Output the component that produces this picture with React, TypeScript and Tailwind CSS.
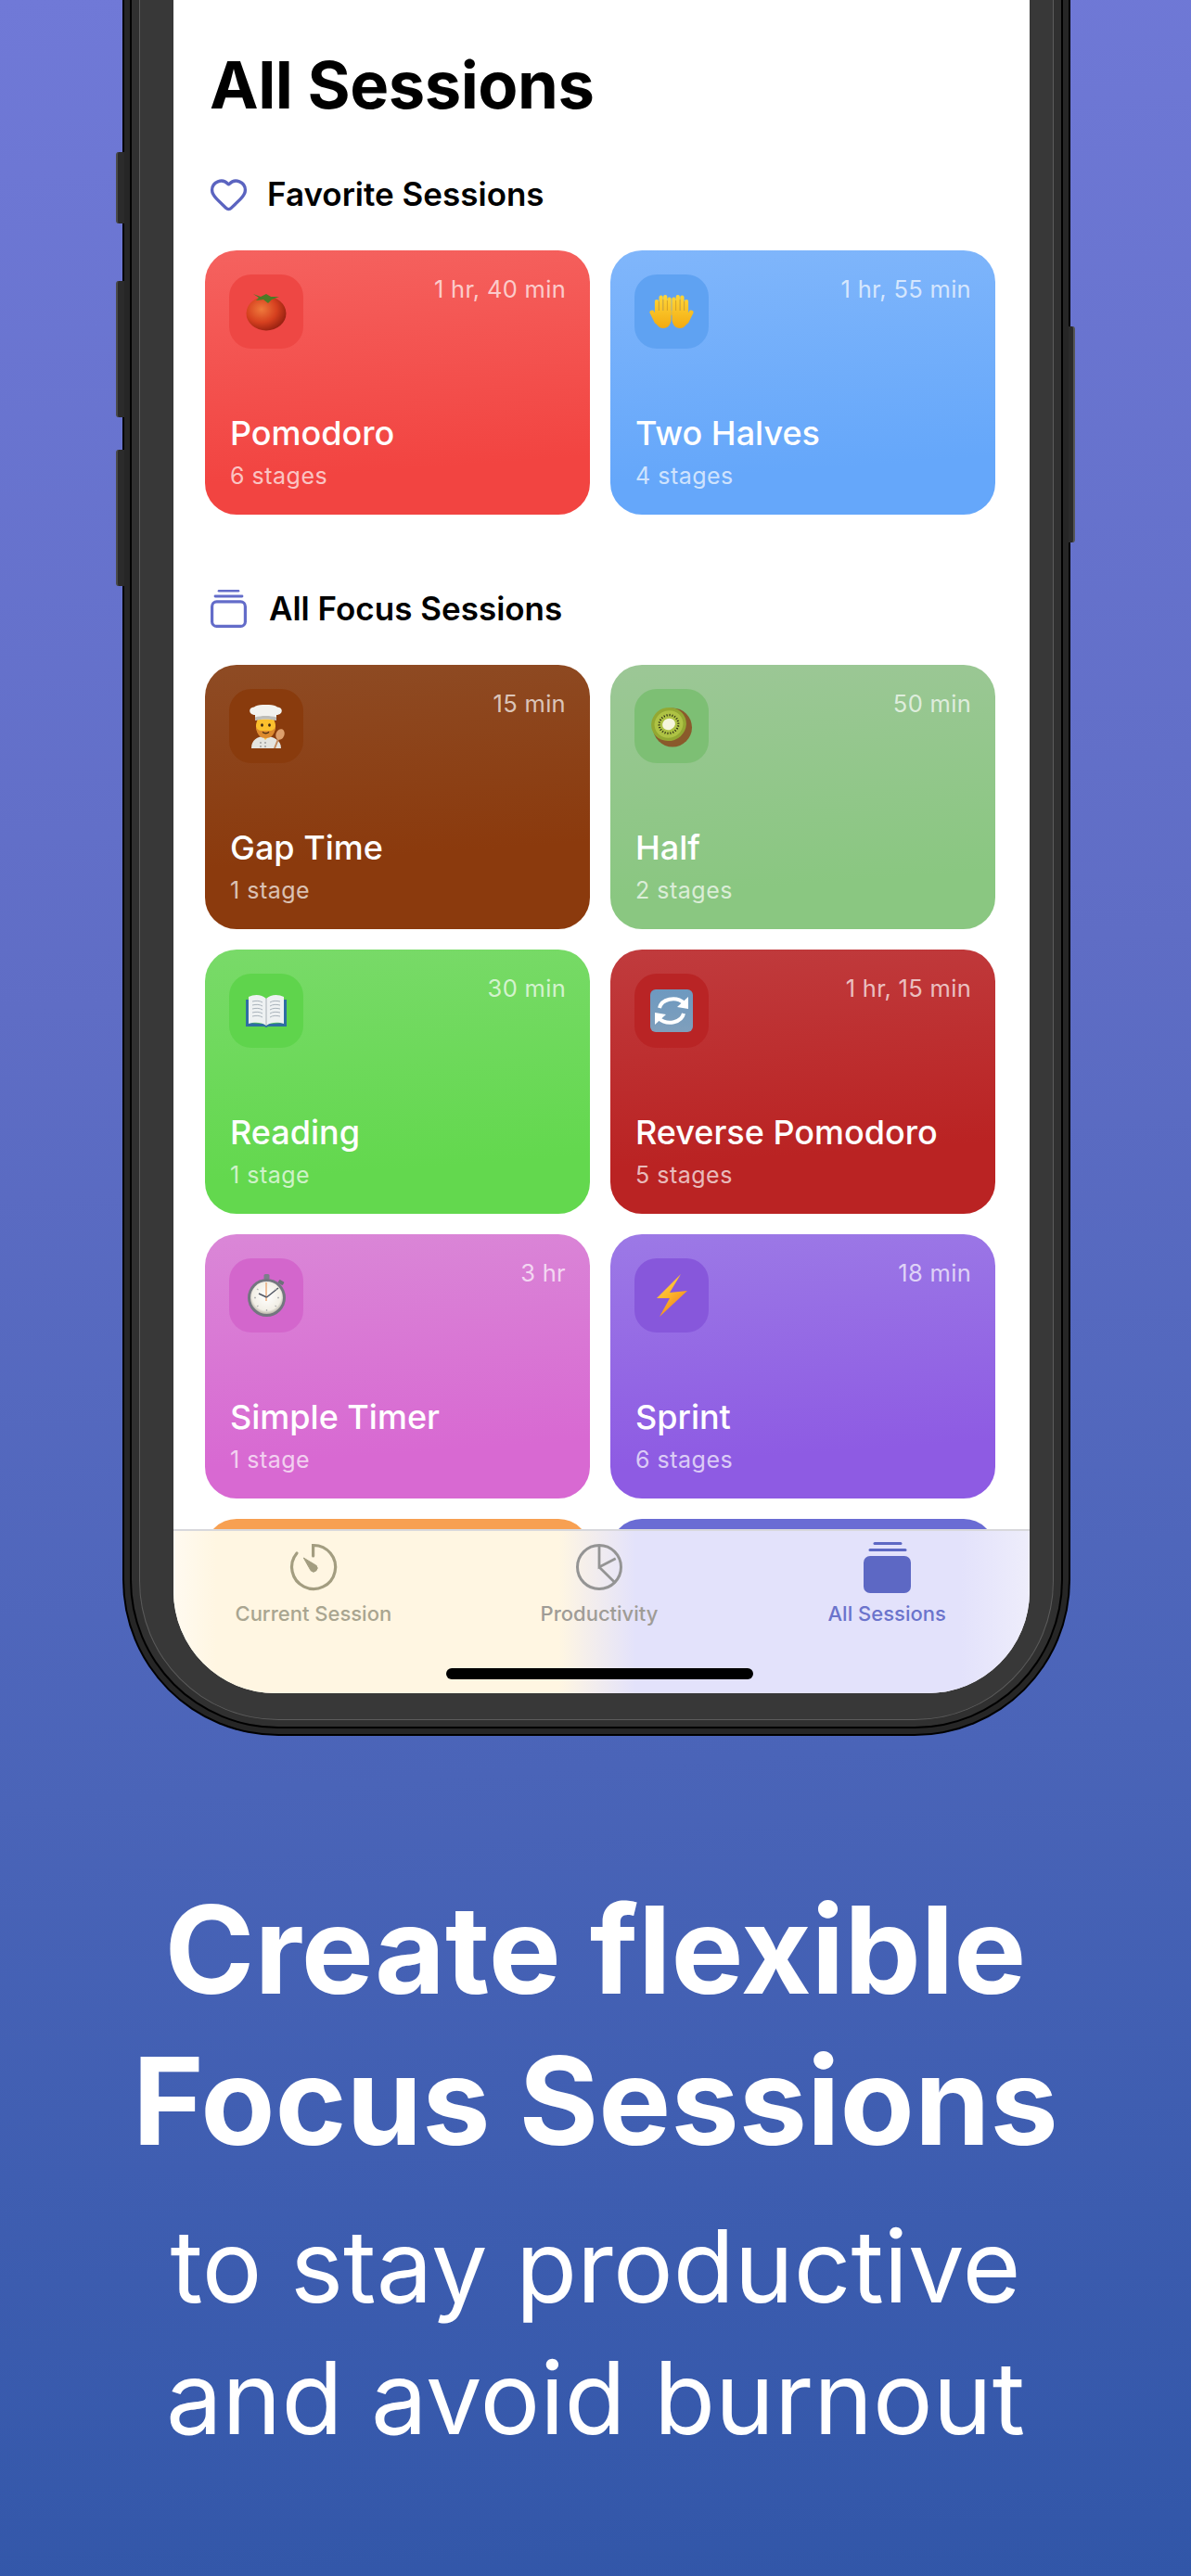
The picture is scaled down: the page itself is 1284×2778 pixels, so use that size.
import { Heart } from 'lucide-react'
import type { ReactNode } from 'react'

function Tomato() {
  return (
    <svg viewBox="0 0 44 42" className="h-[42px] w-[44px]">
      <defs>
        <radialGradient id="tomato" cx="0.38" cy="0.38" r="0.7">
          <stop offset="0" stopColor="#ef7a3c" />
          <stop offset="0.55" stopColor="#d6401f" />
          <stop offset="1" stopColor="#8e1c0e" />
        </radialGradient>
      </defs>
      <ellipse cx="22" cy="23" rx="21.5" ry="18.5" fill="url(#tomato)" />
      <path d="M8 2 L16 5 L22 2 L27 5 L36 5 L28 8 L24 12 L19 8 L11 9 L14 6 Z" fill="#4c7a26" />
    </svg>
  )
}

function Hand({ flip }: { flip?: boolean }) {
  return (
    <g transform={flip ? 'translate(48 0) scale(-1 1)' : undefined}>
      <path d="M3 20 L8 30" stroke="url(#palm)" strokeWidth="5" strokeLinecap="round" />
      <path d="M6 18 H23.5 V27 C23.5 33 20 37 15 37 C10 37 6 32 6 26 Z" fill="url(#palm)" />
      <path d="M8 8 V20 M12.6 3.5 V20 M17.2 3 V20 M21.6 5.5 V22" stroke="url(#palm)" strokeWidth="4.2" strokeLinecap="round" />
      <path d="M10.3 8 V18 M14.9 6 V18 M19.4 7 V18" stroke="#d9960f" strokeWidth="0.7" />
    </g>
  )
}

function Hands() {
  return (
    <svg viewBox="0 0 48 38" className="h-[38px] w-[48px]">
      <defs>
        <linearGradient id="palm" x1="0" y1="0" x2="0" y2="38" gradientUnits="userSpaceOnUse">
          <stop offset="0" stopColor="#ffd83b" />
          <stop offset="1" stopColor="#f3a90f" />
        </linearGradient>
      </defs>
      <Hand />
      <Hand flip />
    </svg>
  )
}

function Chef() {
  return (
    <svg viewBox="0 0 42 47" className="h-[47px] w-[42px]">
      <path d="M5 47 C5 38 11 34 20 34 C29 34 37 38 37 47 Z" fill="#e4e4e0" />
      <path d="M17 34 L20 38 L24 34 Z" fill="#f5b942" />
      <circle cx="15" cy="41" r="0.9" fill="#999" />
      <circle cx="20" cy="41" r="0.9" fill="#999" />
      <circle cx="15" cy="45" r="0.9" fill="#999" />
      <circle cx="20" cy="45" r="0.9" fill="#999" />
      <ellipse cx="20.5" cy="23" rx="10.5" ry="12" fill="#fbc02d" />
      <path d="M10 24 C11 33 15 36 20.5 36 C26 36 30 33 31 24 C28 29 25 28 20.5 28 C16 28 13 29 10 24 Z" fill="#dd8a2e" />
      <ellipse cx="16.5" cy="22" rx="1.4" ry="1.8" fill="#3a2410" />
      <ellipse cx="24.5" cy="22" rx="1.4" ry="1.8" fill="#3a2410" />
      <path d="M17 29.5 C19 31 22 31 24 29.5" stroke="#3a2410" strokeWidth="1.3" fill="none" />
      <path d="M9 17 L9 11 C2 11 1 3 8 2.5 C12 -1 29 -1 33 2.5 C40 3 39 11 32 11 L32 17 C25 15 16 15 9 17 Z" fill="#f2f2ee" />
      <path d="M9 17 C16 15 25 15 32 17 L32 13.5 C25 11.5 16 11.5 9 13.5 Z" fill="#bdbdb8" />
      <path d="M30 47 L34 37" stroke="#c48a5c" strokeWidth="2" />
      <ellipse cx="36" cy="32" rx="4.5" ry="6" transform="rotate(20 36 32)" fill="#dd9f6c" />
    </svg>
  )
}

function Kiwi() {
  const seeds = Array.from({ length: 22 }, (_, i) => (i * Math.PI * 2) / 22)
  return (
    <svg viewBox="0 0 46 45" className="h-[45px] w-[46px]">
      <ellipse cx="24" cy="23.5" rx="21" ry="21" fill="#8a5a2b" />
      <g transform="rotate(-20 20 20)">
        <ellipse cx="20" cy="20" rx="19" ry="18" fill="#93a832" />
        <ellipse cx="20" cy="20" rx="15.5" ry="14.5" fill="#aec244" />
        {seeds.map((a) => (
          <ellipse
            key={a}
            cx={20 + Math.cos(a) * 10.5}
            cy={20 + Math.sin(a) * 9.8}
            rx="1.3"
            ry="0.6"
            transform={`rotate(${(a * 180) / Math.PI} ${20 + Math.cos(a) * 10.5} ${20 + Math.sin(a) * 9.8})`}
            fill="#2b2b16"
          />
        ))}
        <ellipse cx="20" cy="20" rx="7" ry="6" fill="#f6f6dc" />
      </g>
    </svg>
  )
}

function Book() {
  return (
    <svg viewBox="0 0 44 36" className="h-[36px] w-[44px]">
      <path d="M0 6 L3 6 L3 31 L19 32 L22 34 L25 32 L41 31 L41 6 L44 6 L44 35 L24 35 L22 36 L20 35 L0 35 Z" fill="#2f6da3" />
      <path d="M3 3 C9 0 17 0 22 5 C27 0 35 0 41 3 L41 32 C35 30 27 30 22 34 C17 30 9 30 3 32 Z" fill="#eef1f2" />
      <path d="M22 5 L22 34" stroke="#a8b0b6" strokeWidth="1" />
      <path
        d="M7 8 C11 7 15 7 18 9 M7 12 C11 11 15 11 18 13 M7 16 C11 15 15 15 18 17 M7 20 C11 19 15 19 18 21 M7 24 C11 23 15 23 18 25 M37 8 C33 7 29 7 26 9 M37 12 C33 11 29 11 26 13 M37 16 C33 15 29 15 26 17 M37 20 C33 19 29 19 26 21 M37 24 C33 23 29 23 26 25"
        stroke="#a9b3bb"
        strokeWidth="1"
        fill="none"
      />
    </svg>
  )
}

function Refresh() {
  return (
    <svg viewBox="0 0 46 46" className="size-[46px]">
      <defs>
        <linearGradient id="refresh" x1="0" y1="0" x2="0" y2="1">
          <stop offset="0" stopColor="#6d99c0" />
          <stop offset="1" stopColor="#7f9fbc" />
        </linearGradient>
      </defs>
      <rect width="46" height="46" rx="6" fill="url(#refresh)" />
      <path d="M10 20 C12 11 27 6 37 15" stroke="#fff" strokeWidth="4" fill="none" />
      <path d="M41 8 L41 21 L29 19 Z" fill="#fff" />
      <path d="M36 26 C34 35 19 40 9 31" stroke="#fff" strokeWidth="4" fill="none" />
      <path d="M5 38 L5 25 L17 27 Z" fill="#fff" />
    </svg>
  )
}

function Stopwatch() {
  return (
    <svg viewBox="0 0 41 46" className="h-[46px] w-[41px]">
      <defs>
        <radialGradient id="dial" cx="0.5" cy="0.45" r="0.55">
          <stop offset="0" stopColor="#ffffff" />
          <stop offset="0.8" stopColor="#f2efe6" />
          <stop offset="1" stopColor="#b9b5a8" />
        </radialGradient>
      </defs>
      <rect x="17.5" y="0" width="6" height="6" rx="1.5" fill="#7b7f8a" />
      <rect x="33" y="7" width="6" height="4" rx="1" transform="rotate(30 36 9)" fill="#6c707a" />
      <circle cx="20.5" cy="25.5" r="20.5" fill="#73767f" />
      <circle cx="20.5" cy="25.5" r="17.5" fill="url(#dial)" />
      <path d="M20 9 L20 29" stroke="#e8995f" strokeWidth="1.2" />
      <path d="M20.5 25 L12 21 M20.5 25 L33 15" stroke="#555a66" strokeWidth="1.6" />
      <path
        d="M20.5 38 v2 M7 25.5 h2 M32 25.5 h2 M10 16 l1.5 1 M31 16 l-1.5 1 M10 35 l1.5 -1 M31 35 l-1.5 -1"
        stroke="#b5b5b5"
        strokeWidth="1.3"
      />
    </svg>
  )
}

function Bolt() {
  return (
    <svg viewBox="0 0 33 46" className="h-[46px] w-[33px]">
      <defs>
        <linearGradient id="bolt" x1="0" y1="0" x2="0.6" y2="1">
          <stop offset="0" stopColor="#ffdf55" />
          <stop offset="0.55" stopColor="#fdb52a" />
          <stop offset="1" stopColor="#f07c1c" />
        </linearGradient>
      </defs>
      <path d="M26 0 L14 20 L33 18 L3 46 L14 26 L0 26 Z" fill="url(#bolt)" />
    </svg>
  )
}

function StackIcon({ filled }: { filled?: boolean }) {
  if (filled) {
    return (
      <svg viewBox="0 0 51 55" className="h-[55px] w-[51px] fill-[#5d68c4]">
        <rect x="10.5" y="0" width="31" height="3" rx="1.5" />
        <rect x="5.5" y="7" width="41" height="3" rx="1.5" />
        <rect x="0" y="15" width="51" height="40" rx="7" />
      </svg>
    )
  }
  return (
    <svg viewBox="0 0 39 41" className="h-[41px] w-[39px] fill-none stroke-[#636cc9]">
      <path d="M9 1.3 H30" strokeWidth="2.6" strokeLinecap="round" />
      <path d="M5 7 H34" strokeWidth="2.8" strokeLinecap="round" />
      <rect x="1.6" y="12.9" width="35.8" height="26.5" rx="5" strokeWidth="3.2" />
    </svg>
  )
}

function TimerIcon() {
  return (
    <svg viewBox="0 0 60 60" className="size-[60px] fill-none stroke-[#a39d80]">
      <path d="M29.6 18 V6.5 A23.5 23.5 0 1 1 12 15" strokeWidth="3.2" strokeLinecap="round" />
      <path d="M19.3 20 L32.9 28.2 A4 4 0 1 1 27.1 33.8 Z" className="fill-[#a39d80]" strokeWidth="1" strokeLinejoin="round" />
    </svg>
  )
}

function PieIcon() {
  return (
    <svg viewBox="0 0 60 60" className="size-[60px] fill-none stroke-[#949494]" strokeWidth="3">
      <circle cx="30" cy="30" r="23.5" />
      <path d="M30 6.5 V30 L47.7 20.7 M30 30 L46 45.7" strokeWidth="2.8" />
    </svg>
  )
}

type Session = {
  name: string
  time: string
  stages: string
  icon: ReactNode
  bg: string
  box: string
}

const favorites: Session[] = [
  { name: 'Pomodoro', time: '1 hr, 40 min', stages: '6 stages', icon: <Tomato />, bg: 'bg-[linear-gradient(176deg,#f5625f,#f24441_80%)]', box: 'bg-[#ee4744]' },
  { name: 'Two Halves', time: '1 hr, 55 min', stages: '4 stages', icon: <Hands />, bg: 'bg-[linear-gradient(176deg,#80b6fb,#65a7fa_80%)]', box: 'bg-[#5fa2f2]' },
]

const sessions: Session[] = [
  { name: 'Gap Time', time: '15 min', stages: '1 stage', icon: <Chef />, bg: 'bg-[linear-gradient(176deg,#8e4b24,#8b3a0d_70%)]', box: 'bg-[#893b0d]' },
  { name: 'Half', time: '50 min', stages: '2 stages', icon: <Kiwi />, bg: 'bg-[linear-gradient(176deg,#9cc796,#8ac781_80%)]', box: 'bg-[#7dbf74]' },
  { name: 'Reading', time: '30 min', stages: '1 stage', icon: <Book />, bg: 'bg-[linear-gradient(176deg,#79da69,#63d84e_80%)]', box: 'bg-[#5fd44c]' },
  { name: 'Reverse Pomodoro', time: '1 hr, 15 min', stages: '5 stages', icon: <Refresh />, bg: 'bg-[linear-gradient(176deg,#c03b3d,#ba2323_75%)]', box: 'bg-[#b92425]' },
  { name: 'Simple Timer', time: '3 hr', stages: '1 stage', icon: <Stopwatch />, bg: 'bg-[linear-gradient(176deg,#da87d7,#d869d2_80%)]', box: 'bg-[#d366cc]' },
  { name: 'Sprint', time: '18 min', stages: '6 stages', icon: <Bolt />, bg: 'bg-[linear-gradient(176deg,#9c79e6,#8e5be3_80%)]', box: 'bg-[#8757db]' },
]

function SessionCard({ session }: { session: Session }) {
  return (
    <div className={`flex h-[285px] flex-col justify-between rounded-[34px] px-[26px] pt-[26px] pb-[26px] text-white ${session.bg}`}>
      <div className="flex items-start justify-between">
        <div className={`flex size-[80px] items-center justify-center rounded-[24px] ${session.box}`}>{session.icon}</div>
        <span className="text-[25.5px] leading-[32px] tracking-[0.3px] text-white/70">{session.time}</span>
      </div>
      <div className="pl-[1px]">
        <p className="text-[36px] leading-[42px] font-medium">{session.name}</p>
        <p className="mt-[9px] text-[25px] leading-[32px] tracking-[0.5px] text-white/70">{session.stages}</p>
      </div>
    </div>
  )
}

function TabItem({ icon, label, color, shift }: { icon: ReactNode; label: string; color: string; shift: string }) {
  return (
    <div className={`flex flex-col items-center ${shift}`}>
      <div className="flex h-[60px] items-center justify-center">{icon}</div>
      <span className={`mt-[6px] text-[22px] leading-[28px] font-medium ${color}`}>{label}</span>
    </div>
  )
}

export default function App() {
  return (
    <div className="relative h-[2778px] w-[1284px] overflow-hidden bg-[linear-gradient(176deg,#7079d7_0%,#5f6dc5_38%,#4a64b8_68%,#3156a8_100%)] font-[family-name:Inter,sans-serif]">
      <div className="relative ml-[132px] w-[1022px]">
        {/* side buttons */}
        <div className="absolute top-[164px] -left-[7px] h-[77px] w-[9px] rounded-l-[3px] border-l-2 border-[#4a4a4a] bg-[#2b2b2b]" />
        <div className="absolute top-[303px] -left-[7px] h-[147px] w-[9px] rounded-l-[3px] border-l-2 border-[#4a4a4a] bg-[#2b2b2b]" />
        <div className="absolute top-[485px] -left-[7px] h-[147px] w-[9px] rounded-l-[3px] border-l-2 border-[#4a4a4a] bg-[#2b2b2b]" />
        <div className="absolute top-[352px] -right-[5px] h-[233px] w-[7px] rounded-r-[3px] border-r-2 border-[#555555] bg-[#2b2b2b]" />

        <div className="rounded-b-[168px] bg-black px-[2px] pb-[2px]">
          <div className="rounded-b-[166px] bg-[#262626] px-[6px] pb-[6px]">
            <div className="rounded-b-[160px] bg-black px-[2px] pb-[2px]">
              <div className="rounded-b-[158px] bg-[#303030] px-[8px] pb-[7px]">
                <div className="rounded-b-[150px] border-x border-b border-[#5c5c5c] bg-[#383838] pr-[25px] pb-[28px] pl-[36px]">
                  <div className="flex h-[1826px] w-[923px] flex-col overflow-hidden rounded-b-[110px] bg-white">
                    <div className="h-[1649px] overflow-hidden pr-[37px] pl-[34px]">
                      <h1 className="pt-[52px] pl-[5px] text-[70.5px] leading-[80px] font-bold tracking-[-0.5px] text-black">All Sessions</h1>

                      <div className="mt-[55px] flex h-[44px] items-center pl-[4px]">
                        <Heart className="size-[43px] text-[#5b64c0]" strokeWidth={1.9} />
                        <h2 className="ml-[20px] text-[35px] leading-[44px] font-semibold text-black">Favorite Sessions</h2>
                      </div>
                      <div className="mt-[39px] grid grid-cols-2 gap-[22px]">
                        {favorites.map((s) => (
                          <SessionCard key={s.name} session={s} />
                        ))}
                      </div>

                      <div className="mt-[79px] flex h-[44px] items-center pl-[6px]">
                        <StackIcon />
                        <h2 className="ml-[24px] text-[35px] leading-[44px] font-semibold text-black">All Focus Sessions</h2>
                      </div>
                      <div className="mt-[39px] grid grid-cols-2 gap-[22px]">
                        {sessions.map((s) => (
                          <SessionCard key={s.name} session={s} />
                        ))}
                        {/* next row, only its top edge shows above the tab bar */}
                        <div className="h-[285px] rounded-[34px] bg-[#f7a052]" />
                        <div className="h-[285px] rounded-[34px] bg-[#6a6cd4]" />
                      </div>
                    </div>

                    <div className="flex flex-1 flex-col border-t-2 border-[#d8d8dc] bg-[linear-gradient(90deg,#fffaf0_0%,#fff6e2_5%,#fff6e2_45%,#e3e2fb_54%,#e3e2fb_92%,#eeedfb_100%)]">
                      <div className="grid grid-cols-3 pt-[9px]">
                        <TabItem icon={<TimerIcon />} label="Current Session" color="text-[#a9a590]" shift="pr-[6px]" />
                        <TabItem icon={<PieIcon />} label="Productivity" color="text-[#9f9c96]" shift="pr-[5px]" />
                        <TabItem icon={<StackIcon filled />} label="All Sessions" color="text-[#6b74cc]" shift="" />
                      </div>
                      <div className="mt-[45px] flex justify-center pr-[5px]">
                        <div className="h-[12px] w-[331px] rounded-full bg-black" />
                      </div>
                    </div>
                  </div>
                </div>
              </div>
            </div>
          </div>
        </div>
      </div>

      <div className="mt-[149px] text-center text-white">
        <p className="text-[131px] leading-[163px] font-bold">
          Create flexible
          <br />
          Focus Sessions
        </p>
        <p className="mt-[26px] text-[108px] leading-[142px] font-normal">
          to stay productive
          <br />
          and avoid burnout
        </p>
      </div>
    </div>
  )
}
